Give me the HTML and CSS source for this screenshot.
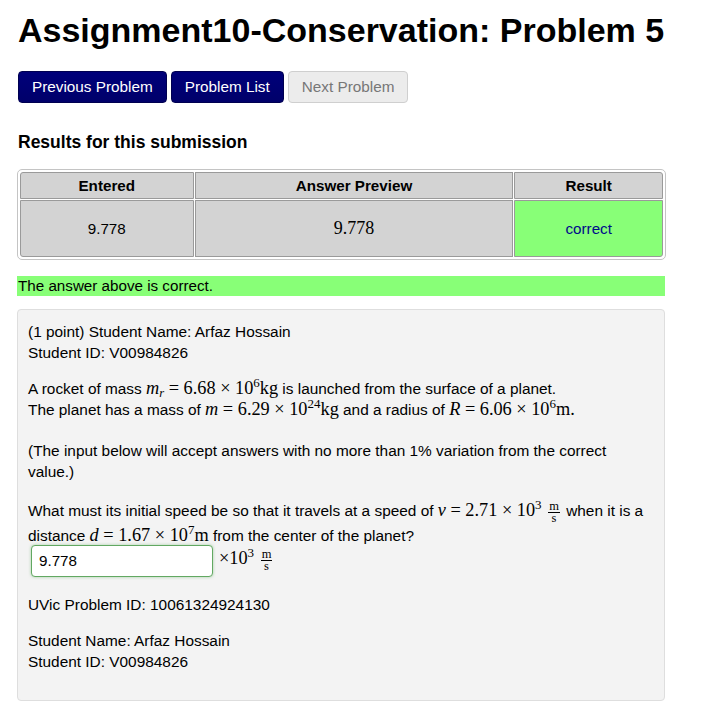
FILE: index.html
```html
<!DOCTYPE html>
<html>
<head>
<meta charset="utf-8">
<link rel="stylesheet" href="styles.css">
</head>
<body>
<div class="page">
  <h1 class="title">Assignment10-Conservation: Problem 5</h1>
  <div class="nav">
    <span class="btn">Previous Problem</span>
    <span class="btn">Problem List</span>
    <span class="btn disabled">Next Problem</span>
  </div>
  <h2 class="results-title">Results for this submission</h2>
  <table class="results">
    <tr>
      <th class="c1">Entered</th>
      <th class="c2">Answer Preview</th>
      <th class="c3">Result</th>
    </tr>
    <tr>
      <td>9.778</td>
      <td class="preview">9.778</td>
      <td class="ok">correct</td>
    </tr>
  </table>
  <div class="correct-bar">The answer above is correct.</div>
  <div class="problem">
    <p class="p1">(1 point) Student Name: Arfaz Hossain<br>Student ID: V00984826</p>
    <p class="p2">A rocket of mass <span class="m"><i>m<sub>r</sub></i> = 6.68 × 10<sup>6</sup>kg</span> is launched from the surface of a planet.<br>The planet has a mass of <span class="m"><i>m</i> = 6.29 × 10<sup>24</sup>kg</span> and a radius of <span class="m"><i>R</i> = 6.06 × 10<sup>6</sup>m.</span></p>
    <p class="p3">(The input below will accept answers with no more than 1% variation from the correct value.)</p>
    <p class="q">What must its initial speed be so that it travels at a speed of <span class="m"><i>v</i> = 2.71 × 10<sup>3</sup> <span class="frac"><span class="num">m</span><span class="den">s</span></span></span> when it is a distance <span class="m"><i>d</i> = 1.67 × 10<sup>7</sup>m</span> from the center of the planet?</p>
    <div class="answer-row"><span class="input">9.778</span><span class="m unit">×10<sup>3</sup> <span class="frac"><span class="num">m</span><span class="den">s</span></span></span></div>
    <p class="p5">UVic Problem ID: 10061324924130</p>
    <p class="p6">Student Name: Arfaz Hossain<br>Student ID: V00984826</p>
  </div>
</div>
</body>
</html>
```
FILE: styles.css
```css
html, body {
  margin: 0;
  padding: 0;
  background: #fff;
}
body {
  font-family: "Liberation Sans", Arial, Helvetica, sans-serif;
  font-size: 15.4px;
  color: #000;
}
.page {
  width: 648px;
  padding: 12px 17px 12px 17px;
}
.title {
  font-size: 34px;
  font-weight: bold;
  margin: 0 0 0 1px;
  line-height: 36px;
}
.nav {
  display: flex;
  gap: 4px;
  margin-top: 23px;
  margin-left: 1px;
}
.btn {
  display: inline-block;
  height: 32px;
  line-height: 30px;
  padding: 0 13px;
  font-size: 15.3px;
  color: #fff;
  background: linear-gradient(#00007a, #00006a);
  border: 1px solid #000050;
  border-radius: 4px;
  box-sizing: border-box;
}
.btn.disabled {
  background: #ececec;
  color: #777;
  border-color: #cfcfcf;
}
.results-title {
  font-size: 17.5px;
  font-weight: bold;
  margin: 28px 0 0 1px;
  line-height: 22px;
}
.results {
  margin-top: 16px;
  width: 649px;
  border-collapse: separate;
  border-spacing: 1px;
  border: 1px solid #c4c4c4;
  border-radius: 5px;
  padding: 1px;
}
.results th, .results td {
  background: #d3d3d3;
  border: 1px solid #9a9a9a;
  text-align: center;
}
.results th {
  height: 25px;
  font-size: 15.2px;
  font-weight: bold;
  padding: 0;
}
.results td {
  height: 55px;
  font-size: 15.2px;
  padding: 0;
}
.results tr:first-child th:first-child { border-top-left-radius: 3px; }
.results tr:first-child th:last-child { border-top-right-radius: 3px; }
.results tr:last-child td:first-child { border-bottom-left-radius: 3px; }
.results tr:last-child td:last-child { border-bottom-right-radius: 3px; }
.c1 { width: 172px; }
.c2 { width: 318px; }
.c3 { width: 147px; }
.results td.preview {
  font-family: "Liberation Serif", "Times New Roman", serif;
  font-size: 18px;
}
.results td.ok {
  background: #88ff77;
  color: #000a8a;
}
.correct-bar {
  margin-top: 16px;
  background: #88ff77;
  height: 20px;
  line-height: 20px;
  font-size: 15.2px;
  padding-left: 1px;
}
.problem {
  margin-top: 13px;
  background: #f3f3f3;
  border: 1px solid #dedede;
  border-radius: 4px;
  padding: 11px 12px 28px 10px;
  line-height: 21px;
}
.problem p {
  margin: 0;
}
.p1 { margin-bottom: 15px !important; }
.p2 { margin-bottom: 20px !important; }
.p3 { margin-bottom: 16px !important; }
.p5 { margin: 17px 0 15px 0 !important; }
.m {
  font-family: "Liberation Serif", "Times New Roman", serif;
  font-size: 18.3px;
}
.m i {
  font-style: italic;
}
.m sub {
  font-size: 12.5px;
  vertical-align: -3px;
  line-height: 0;
}
.m sup {
  font-size: 13px;
  vertical-align: 7px;
  line-height: 0;
}
.frac {
  display: inline-flex;
  flex-direction: column;
  align-items: center;
  vertical-align: 6px;
  font-size: 12.5px;
  line-height: 9px;
  margin: 0 2px;
}
.frac .num {
  border-bottom: 1px solid #000;
  padding: 0 1px 1px 1px;
}
.frac .den {
  padding-top: 1px;
}
.q {
  line-height: 25px;
}
.answer-row {
  display: flex;
  align-items: center;
  gap: 6px;
  margin: -3px 0 0 3px;
  line-height: 21px;
}
.input {
  display: inline-block;
  width: 182px;
  height: 32px;
  line-height: 30px;
  box-sizing: border-box;
  padding: 0 7px;
  background: #fff;
  border: 1px solid #62a862;
  border-radius: 4px;
  box-shadow: 0 0 3px rgba(80, 170, 80, 0.5);
  font-size: 15.2px;
  font-family: "Liberation Sans", Arial, sans-serif;
}
.unit {
  margin-top: -4px;
}
```
